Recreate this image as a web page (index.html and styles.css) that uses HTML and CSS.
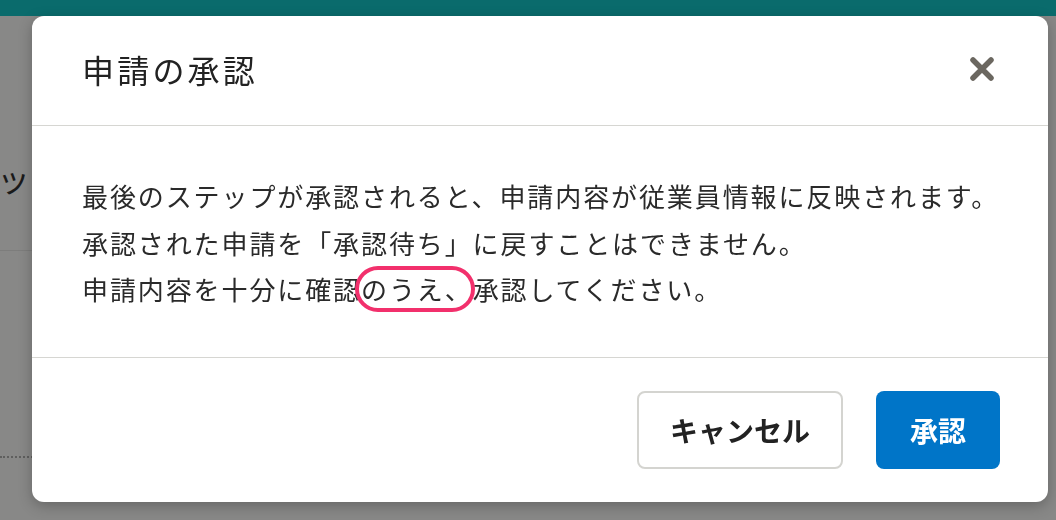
FILE: index.html
```html
<!DOCTYPE html>
<html>
<head>
<meta name="viewport" content="width=device-width, initial-scale=1">
<title>申請の承認</title>
<link rel="stylesheet" href="styles.css">
</head>
<body>

<div class="topbar"></div>
<div class="page">
  <div class="page-title">ッ</div>
  <div class="page-rule"></div>
  <div class="page-dots"></div>
</div>

<!-- Modal -->
<div class="overlay">
  <div class="modal">
    <div class="modal-header">
      <h2 class="modal-title">申請の承認</h2>
      <button class="close-btn" aria-label="閉じる">
        <svg width="26" height="26" viewBox="0 0 26 26">
          <path d="M4 4 L22 22 M22 4 L4 22" stroke="#6b6760" stroke-width="5.5" stroke-linecap="round"/>
        </svg>
      </button>
    </div>
    <div class="modal-body">
      <p>最後のステップが承認されると、申請内容が従業員情報に反映されます。</p>
      <p>承認された申請を「承認待ち」に戻すことはできません。</p>
      <p>申請内容を十分に確認<span class="mark">のうえ、</span>承認してください。</p>
    </div>
    <div class="modal-footer">
      <button class="btn btn-cancel">キャンセル</button>
      <button class="btn btn-approve">承認</button>
    </div>
  </div>
</div>

</body>
</html>
```

FILE: styles.css
```css
* {box-sizing: border-box}
body {
  margin: 0;
  font-family: "Noto Sans CJK JP", "Noto Sans", sans-serif;
  background-color: #888887;
  height: 520px;
  overflow: hidden;
}
.topbar {
  height: 16px;
  background-color: #0a6b6c;
}
.page-title {
  font-size: 33px;
  color: #1a1a1a;
  margin-top: 142px;
  margin-left: -3px;
  line-height: 40px;
}
.page-rule {
  height: 1px;
  background-color: #7d7d7c;
  margin-top: 52px;
  width: 40px;
}
.page-dots {
  margin-top: 205px;
  width: 40px;
  border-top: 2px dotted #5f5f5e;
}

/* Modal */
.overlay {
  position: fixed;
  top: 0;
  left: 0;
  right: 0;
  bottom: 0;
  padding: 16px 8px 18px 32px;
}
.modal {
  background-color: #fff;
  border-radius: 12px;
  height: 486px;
  display: flex;
  flex-direction: column;
  box-shadow: 0 4px 14px rgba(0, 0, 0, 0.25);
}
.modal-header {
  height: 110px;
  display: flex;
  align-items: center;
  justify-content: space-between;
  padding: 0 50px 4px 50px;
  border-bottom: 1px solid #d6d6d2;
}
.modal-title {
  margin: 0;
  font-size: 32px;
  font-weight: normal;
  letter-spacing: 3.2px;
  color: #222;
}
.close-btn {
  background: none;
  border: none;
  padding: 0;
  width: 32px;
  height: 32px;
  display: flex;
  align-items: center;
  justify-content: center;
  cursor: pointer;
}
.modal-body {
  padding: 47px 40px 0 50px;
  height: 232px;
  border-bottom: 1px solid #d6d6d2;
}
.modal-body p {
  margin: 0;
  font-size: 26px;
  line-height: 46.5px;
  letter-spacing: 1.9px;
  white-space: nowrap;
  color: #2a2a2a;
}
.mark {
  position: relative;
}
.mark::after {
  content: "";
  position: absolute;
  left: -6px;
  right: -2px;
  top: -4px;
  bottom: -5px;
  border: 4.5px solid #f2306c;
  border-radius: 26px;
}
.modal-footer {
  flex: 1;
  display: flex;
  align-items: center;
  justify-content: flex-end;
  gap: 33px;
  padding: 0 48px 0 0;
}
.btn {
  font-family: "Noto Sans CJK JP", sans-serif;
  font-size: 28px;
  font-weight: bold;
  border-radius: 8px;
  cursor: pointer;
  height: 78px;
}
.btn-cancel {
  width: 206px;
  background-color: #fff;
  color: #222;
  border: 2px solid #d4d4d0;
}
.btn-approve {
  width: 124px;
  background-color: #0075c8;
  color: #fff;
  border: none;
}
```
